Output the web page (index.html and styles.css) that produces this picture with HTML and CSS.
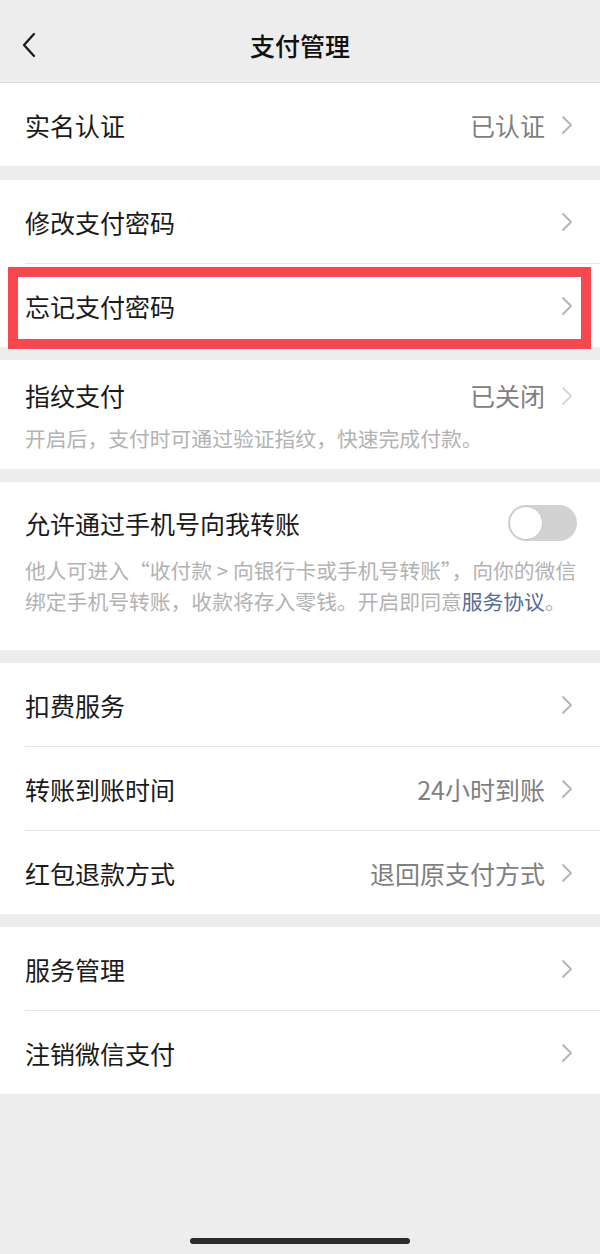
FILE: index.html
```html
<!DOCTYPE html>
<html lang="zh-CN">
<head>
<meta charset="utf-8">
<title>支付管理</title>
<link rel="stylesheet" href="styles.css">
</head>
<body>
<div class="page">
  <header class="nav">
    <div class="nav-back">
      <svg width="16" height="26" viewBox="0 0 16 26"><path d="M13 2 L3 13 L13 24" fill="none" stroke="#1a1a1a" stroke-width="2.3" stroke-linecap="round" stroke-linejoin="round"/></svg>
    </div>
    <h1 class="nav-title">支付管理</h1>
    <div class="nav-side"></div>
  </header>

  <section class="group first">
    <div class="row">
      <span class="label">实名认证</span>
      <span class="value">已认证</span>
      <svg class="chev" width="12" height="20" viewBox="0 0 12 20"><path d="M2 2 L10 10 L2 18" fill="none" stroke="#b3b3b3" stroke-width="1.8" stroke-linecap="round" stroke-linejoin="round"/></svg>
    </div>
  </section>

  <section class="group">
    <div class="row">
      <span class="label">修改支付密码</span>
      <svg class="chev" width="12" height="20" viewBox="0 0 12 20"><path d="M2 2 L10 10 L2 18" fill="none" stroke="#b3b3b3" stroke-width="1.8" stroke-linecap="round" stroke-linejoin="round"/></svg>
    </div>
    <div class="row highlight">
      <span class="label">忘记支付密码</span>
      <svg class="chev" width="12" height="20" viewBox="0 0 12 20"><path d="M2 2 L10 10 L2 18" fill="none" stroke="#b3b3b3" stroke-width="1.8" stroke-linecap="round" stroke-linejoin="round"/></svg>
    </div>
  </section>

  <section class="group block finger">
    <div class="block-head">
      <span class="label">指纹支付</span>
      <span class="value">已关闭</span>
      <svg class="chev" width="12" height="20" viewBox="0 0 12 20"><path d="M2 2 L10 10 L2 18" fill="none" stroke="#d6d6d6" stroke-width="1.8" stroke-linecap="round" stroke-linejoin="round"/></svg>
    </div>
    <p class="desc">开启后，支付时可通过验证指纹，快速完成付款。</p>
  </section>

  <section class="group block phone">
    <div class="block-head">
      <span class="label">允许通过手机号向我转账</span>
      <span class="switch"><span class="knob"></span></span>
    </div>
    <p class="desc">他人可进入“收付款 &gt; 向银行卡或手机号转账”，向你的微信绑定手机号转账，收款将存入零钱。开启即同意<span class="link">服务协议</span>。</p>
  </section>

  <section class="group">
    <div class="row">
      <span class="label">扣费服务</span>
      <svg class="chev" width="12" height="20" viewBox="0 0 12 20"><path d="M2 2 L10 10 L2 18" fill="none" stroke="#b3b3b3" stroke-width="1.8" stroke-linecap="round" stroke-linejoin="round"/></svg>
    </div>
    <div class="row">
      <span class="label">转账到账时间</span>
      <span class="value">24小时到账</span>
      <svg class="chev" width="12" height="20" viewBox="0 0 12 20"><path d="M2 2 L10 10 L2 18" fill="none" stroke="#b3b3b3" stroke-width="1.8" stroke-linecap="round" stroke-linejoin="round"/></svg>
    </div>
    <div class="row">
      <span class="label">红包退款方式</span>
      <span class="value">退回原支付方式</span>
      <svg class="chev" width="12" height="20" viewBox="0 0 12 20"><path d="M2 2 L10 10 L2 18" fill="none" stroke="#b3b3b3" stroke-width="1.8" stroke-linecap="round" stroke-linejoin="round"/></svg>
    </div>
  </section>

  <section class="group">
    <div class="row">
      <span class="label">服务管理</span>
      <svg class="chev" width="12" height="20" viewBox="0 0 12 20"><path d="M2 2 L10 10 L2 18" fill="none" stroke="#b3b3b3" stroke-width="1.8" stroke-linecap="round" stroke-linejoin="round"/></svg>
    </div>
    <div class="row">
      <span class="label">注销微信支付</span>
      <svg class="chev" width="12" height="20" viewBox="0 0 12 20"><path d="M2 2 L10 10 L2 18" fill="none" stroke="#b3b3b3" stroke-width="1.8" stroke-linecap="round" stroke-linejoin="round"/></svg>
    </div>
  </section>

  <div class="home-bar"></div>
</div>
</body>
</html>
```

FILE: styles.css
```css
* { box-sizing: border-box; }
html, body { margin: 0; padding: 0; }
body {
  background: #ededed;
  font-family: "Noto Sans CJK SC", "Noto Sans", sans-serif;
  color: #1a1a1a;
}
.page {
  min-height: 1254px;
  display: flex;
  flex-direction: column;
}
.nav {
  height: 83px;
  padding-top: 12px;
  border-bottom: 1px solid #dcdcdc;
  display: grid;
  grid-template-columns: 80px 1fr 80px;
  align-items: center;
}
.nav-back {
  padding-left: 21px;
  display: flex;
  align-items: center;
  padding-bottom: 4px;
}
.nav-title {
  margin: 0;
  text-align: center;
  font-size: 25px;
  font-weight: 500;
  line-height: 32px;
  color: #111;
  padding-bottom: 4px;
}
.group {
  background: #fff;
  margin-bottom: 13px;
}
.group.first { margin-bottom: 14px; }
.row {
  margin-left: 25px;
  height: 83px;
  padding-right: 27px;
  display: flex;
  align-items: center;
}
.row + .row {
  border-top: 1px solid #e6e6e6;
  height: 84px;
}
.label {
  font-size: 25px;
  line-height: 32px;
  flex: 1;
  padding-top: 1px;
}
.value {
  font-size: 25px;
  line-height: 32px;
  color: #7f7f7f;
  margin-right: 16px;
  padding-top: 1px;
}
.chev { display: block; margin-top: 1px; }
.highlight { position: relative; }
.highlight::after {
  content: "";
  position: absolute;
  top: 3px;
  left: -17px;
  right: 9px;
  bottom: -2px;
  border: 10px solid #f7474f;
}
.block {
  padding: 19px 27px 15px 25px;
}
.block-head {
  display: flex;
  align-items: center;
  height: 32px;
}
.block-head .label { padding-top: 0; }
.block-head .value { padding-top: 0; }
.desc {
  margin: 12px 0 0;
  font-size: 20.8px;
  line-height: 31px;
  color: #b2b2b2;
}
.finger .value { color: #808080; }
.phone {
  padding: 25px 23px 33px 25px;
}
.phone .desc { margin-top: 16px; }
.link { color: #576b95; }
.switch {
  position: relative;
  width: 69px;
  height: 36px;
  border-radius: 18px;
  background: #d2d2d2;
  flex: none;
}
.knob {
  position: absolute;
  left: 1px;
  top: 1px;
  width: 34px;
  height: 34px;
  border-radius: 50%;
  background: #fff;
  border: 1.5px solid #c6c6c6;
}
.home-bar {
  margin: auto auto 10px;
  width: 220px;
  height: 6px;
  border-radius: 3px;
  background: #2b2b2b;
}
```
